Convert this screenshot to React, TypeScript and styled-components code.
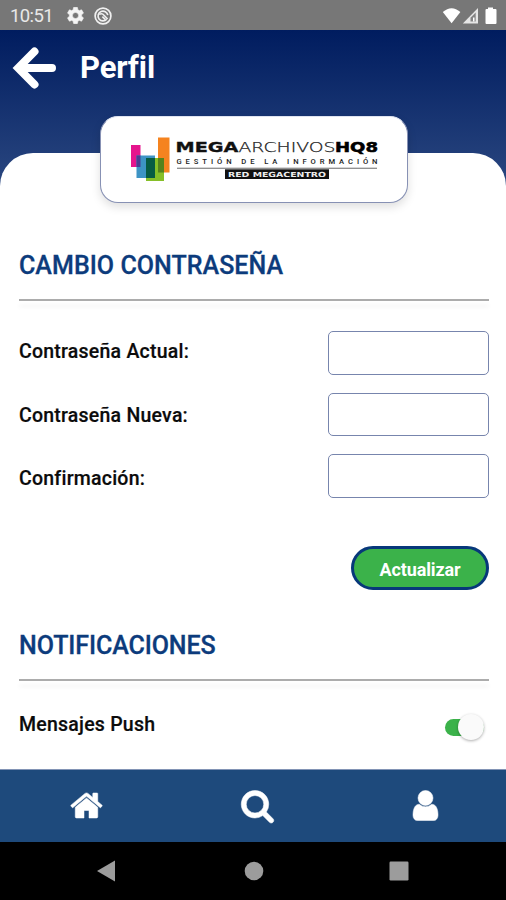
import React from 'react';
import styled, { createGlobalStyle } from 'styled-components';

const GlobalStyle = createGlobalStyle`
  * { box-sizing: border-box; }
  body { margin: 0; font-family: Roboto, "Liberation Sans", sans-serif; background: #fff; }
`;

const Screen = styled.div`
  width: 506px;
  height: 900px;
  display: flex;
  flex-direction: column;
  overflow: hidden;
  background: #fff;
`;

const StatusBar = styled.div`
  height: 30px;
  flex: none;
  display: flex;
  align-items: center;
  padding: 1px 8px 0 10px;
  background: #777;
  color: #e8e8e8;
`;

const Clock = styled.span`
  width: 57px;
  font-size: 18.5px;
  line-height: 28px;
  letter-spacing: -0.6px;
`;

const StatusIcons = styled.div`
  display: flex;
  align-items: center;
  gap: 10px;
  flex: 1;
`;

const SystemIcons = styled.div`
  display: flex;
`;

const Header = styled.header`
  height: 156px;
  flex: none;
  display: flex;
  flex-direction: column;
  background: linear-gradient(#001c5f, #2a4780);
`;

const TitleRow = styled.div`
  height: 86px;
  flex: none;
  display: flex;
  padding-left: 12px;
`;

const BackButton = styled.button`
  width: 46px;
  height: 46px;
  margin-top: 15px;
  padding: 0;
  border: 0;
  background: none;
`;

const PageTitle = styled.h1`
  margin: 19px 0 0 22px;
  font-size: 31px;
  line-height: 38px;
  font-weight: 700;
  letter-spacing: -0.1px;
  color: #fff;
`;

const Sheet = styled.main`
  height: 616px;
  flex: none;
  margin-top: -33px;
  padding: 0 17px 0 19px;
  display: flex;
  flex-direction: column;
  background: #fff;
  border-radius: 33px 33px 0 0;
`;

const LogoCard = styled.div`
  width: 308px;
  height: 87px;
  flex: none;
  margin: -37px 0 0 80.5px;
  border: 1px solid #8791b4;
  border-top-color: #dfe4f0;
  border-radius: 18px;
  background: #fff;
  box-shadow: 0 4px 10px rgba(0, 0, 0, 0.13);
`;

const SectionTitle = styled.h2<{ $top: number; $spacing: number }>`
  margin: ${(p) => p.$top}px 0 0;
  height: 36px;
  font-size: 25px;
  line-height: 36px;
  font-weight: 500;
  letter-spacing: ${(p) => p.$spacing}px;
  color: #0c3b7c;
  -webkit-text-stroke: 0.3px #0c3b7c;
`;

const Divider = styled.div`
  height: 2px;
  flex: none;
  margin-top: 15px;
  background: #acacac;
  box-shadow: 0 6px 4px rgba(0, 0, 0, 0.06);
`;

const PasswordForm = styled.div`
  display: flex;
  justify-content: space-between;
  height: 167px;
  margin-top: 30px;
`;

const Labels = styled.div`
  display: flex;
  flex-direction: column;
  gap: 33.5px;
  padding-top: 6px;
`;

const Label = styled.label`
  font-size: 19.5px;
  line-height: 30px;
  font-weight: 500;
  letter-spacing: 0.23px;
  color: #0b0b0b;
  -webkit-text-stroke: 0.2px #0b0b0b;
`;

const Inputs = styled.div`
  display: flex;
  flex-direction: column;
  gap: 18px;
`;

const Input = styled.input`
  width: 161.5px;
  height: 43.6px;
  padding: 0 10px;
  border: 1.5px solid #7785ad;
  border-radius: 5px;
  background: #fff;
  outline: none;
`;

const UpdateButton = styled.button`
  align-self: flex-end;
  width: 138px;
  height: 44px;
  flex: none;
  margin: 48px 0 0;
  padding: 2px 0 0;
  border: 3px solid #07387a;
  border-radius: 22px;
  background: #3bb24a;
  color: #fff;
  font: 700 18px Roboto, sans-serif;
  letter-spacing: -0.1px;
`;

const SettingRow = styled.div`
  display: flex;
  justify-content: space-between;
  align-items: center;
  height: 30px;
  margin-top: 29px;
  padding-right: 5px;
`;

const Toggle = styled.button`
  display: flex;
  align-items: center;
  justify-content: flex-end;
  width: 39px;
  height: 17px;
  margin-top: 4px;
  padding: 0;
  border: 0;
  border-radius: 9px;
  background: #3bb24a;
`;

const Knob = styled.span`
  width: 26px;
  height: 26px;
  flex: none;
  border-radius: 50%;
  background: #fafafa;
  box-shadow: 0 1px 3px rgba(0, 0, 0, 0.32);
`;

const TabBar = styled.nav`
  height: 73px;
  flex: none;
  display: grid;
  grid-template-columns: 172px 171px 164px;
  align-items: center;
  justify-items: center;
  border-top: 1px solid #8294b5;
  background: #1e4a7c;
`;

const Tab = styled.a`
  display: flex;
  margin-bottom: 2px;
  color: #fff;
`;

const SystemNav = styled.div`
  flex: 1;
  display: grid;
  grid-template-columns: 212px 83px 208px;
  align-items: center;
  justify-items: center;
  background: #000;
`;

const icons = {
  home: 'M1472 992v480q0 26-19 45t-45 19h-384v-384h-256v384h-384q-26 0-45-19t-19-45v-480q0-1 .5-3t.5-3l575-474 575 474q1 2 1 6zm223-69l-62 74q-8 9-21 11h-3q-13 0-21-7l-692-577-692 577q-12 8-24 7-13-2-21-11l-62-74q-8-10-7-23.5t11-21.5l719-599q32-26 76-26t76 26l244 204v-195q0-14 9-23t23-9h192q14 0 23 9t9 23v408l219 182q10 8 11 21.5t-7 23.5z',
  search: 'M1216 832q0-185-131.5-316.5t-316.5-131.5-316.5 131.5-131.5 316.5 131.5 316.5 316.5 131.5 316.5-131.5 131.5-316.5zm512 832q0 52-38 90t-90 38q-54 0-90-38l-343-342q-179 124-399 124-143 0-273.5-55.5t-225-150-150-225-55.5-273.5 55.5-273.5 150-225 225-150 273.5-55.5 273.5 55.5 225 150 150 225 55.5 273.5q0 220-124 399l343 343q37 37 37 90z',
  user: 'M1536 1399q0 109-62.5 187t-150.5 78h-854q-88 0-150.5-78t-62.5-187q0-85 8.5-160.5t31.5-152 58.5-131 94-89 134.5-34.5q131 128 313 128t313-128q76 0 134.5 34.5t94 89 58.5 131 31.5 152 8.5 160.5zm-256-887q0 159-112.5 271.5t-271.5 112.5-271.5-112.5-112.5-271.5 112.5-271.5 271.5-112.5 271.5 112.5 112.5 271.5z',
};

const TabIcon = ({ name }: { name: keyof typeof icons }) => (
  <svg width="35" height="35" viewBox="0 0 1792 1792" fill="currentColor" stroke="currentColor" strokeWidth="26" overflow="visible">
    <path d={icons[name]} />
  </svg>
);

const GearIcon = () => (
  <svg width="17" height="17" viewBox="2 2 20 20" fill="#f4f4f4" stroke="#f4f4f4" strokeWidth="0.7">
    <path d="M19.14 12.94c.04-.3.06-.61.06-.94 0-.32-.02-.64-.07-.94l2.03-1.58a.49.49 0 0 0 .12-.61l-1.92-3.32a.488.488 0 0 0-.59-.22l-2.39.96c-.5-.38-1.03-.7-1.62-.94l-.36-2.54a.484.484 0 0 0-.48-.41h-3.84c-.24 0-.43.17-.47.41l-.36 2.54c-.59.24-1.13.57-1.62.94l-2.39-.96c-.22-.08-.47 0-.59.22L2.74 8.87c-.12.21-.08.47.12.61l2.03 1.58c-.05.3-.09.63-.09.94s.02.64.07.94l-2.03 1.58a.49.49 0 0 0-.12.61l1.92 3.32c.12.22.37.29.59.22l2.39-.96c.5.38 1.03.7 1.62.94l.36 2.54c.05.24.24.41.48.41h3.84c.24 0 .44-.17.47-.41l.36-2.54c.59-.24 1.13-.56 1.62-.94l2.39.96c.22.08.47 0 .59-.22l1.92-3.32c.12-.22.07-.47-.12-.61l-2.01-1.58zM12 15.6A3.6 3.6 0 1 1 12 8.4a3.6 3.6 0 0 1 0 7.2z" />
  </svg>
);

const TrackerIcon = () => (
  <svg width="18" height="18" viewBox="0 0 18 18" fill="none" stroke="#f0f0f0">
    <circle cx="9" cy="9" r="7.9" strokeWidth="1.7" />
    <path d="M12.7 12.2A4.9 4.9 0 1 1 13.8 8.2" strokeWidth="1.6" />
    <path d="M5.2 7.4Q8 5.8 10 8.2L13.6 12M8.4 9.6L11.4 12.6" strokeWidth="1.6" />
  </svg>
);

const Logo = () => (
  <svg width="306" height="85" viewBox="101 117 306 85">
    <rect x="131" y="145" width="9.5" height="22" fill="#e5158d" />
    <rect x="158" y="137.5" width="11.5" height="35" fill="#f5831f" />
    <rect x="136.5" y="155.5" width="18.5" height="22.5" fill="#3d94c5" />
    <rect x="136.5" y="155.5" width="4" height="11.5" fill="#493e93" />
    <rect x="146" y="158" width="18" height="23" fill="#86bf28" />
    <rect x="146" y="158" width="9" height="20" fill="#075c43" />
    <rect x="158" y="158" width="6" height="14.5" fill="#55831c" />
    <g fontFamily='"DejaVu Sans", sans-serif' fontSize="13.2">
      <text x="175.5" y="152" textLength="63" lengthAdjust="spacingAndGlyphs" fontWeight="700" fill="#111" stroke="#111" strokeWidth="0.3">MEGA</text>
      <text x="238.5" y="152" textLength="97" lengthAdjust="spacingAndGlyphs" fontWeight="200" fill="#222" stroke="#222" strokeWidth="0.25">ARCHIVOS</text>
      <text x="335" y="152" textLength="43" lengthAdjust="spacingAndGlyphs" fontWeight="700" fill="#000" stroke="#000" strokeWidth="0.5">HQ8</text>
    </g>
    <text x="176.5" y="163.7" textLength="201" fontFamily="Roboto" fontSize="7.6" fontWeight="500" fill="#222">GESTIÓN DE LA INFORMACIÓN</text>
    <rect x="177" y="167.7" width="200" height="1.1" fill="#777" />
    <rect x="225" y="169.3" width="104" height="9.7" fill="#111" />
    <text x="228" y="176.8" textLength="98" lengthAdjust="spacingAndGlyphs" fontFamily='"DejaVu Sans"' fontSize="7" fontWeight="700" fill="#eee">RED MEGACENTRO</text>
  </svg>
);

export default function App() {
  return (
    <Screen>
      <GlobalStyle />
      <StatusBar>
        <Clock>10:51</Clock>
        <StatusIcons>
          <GearIcon />
          <TrackerIcon />
        </StatusIcons>
        <SystemIcons>
          <svg width="56" height="18" viewBox="0 0 56 18" fill="#fff">
            <path d="M0.8 5Q9.6-2.6 18.4 5L9.6 16.2Z" />
            <path d="M20.8 16.5L36 1V16.5Z" fill="#e6e6e6" />
            <path d="M28.5 14.5V10.8L33.7 5.5V14.5Z" fill="#858585" />
            <path d="M31 10.5h1.5v4H31z" />
            <path d="M46 0.5h5v1.5h2.5q1 0 1 1v13q0 1-1 1h-9q-1 0-1-1V3q0-1 1-1H46z" />
          </svg>
        </SystemIcons>
      </StatusBar>
      <Header>
        <TitleRow>
          <BackButton aria-label="Volver">
            <svg width="46" height="46" viewBox="0 0 46 46" fill="none" stroke="#fff" strokeWidth="8" strokeLinecap="round">
              <path d="M22.5 6.5L6.2 23L22.5 39.5M9 23H40" />
            </svg>
          </BackButton>
          <PageTitle>Perfil</PageTitle>
        </TitleRow>
      </Header>
      <Sheet>
        <LogoCard>
          <Logo />
        </LogoCard>
        <SectionTitle $top={45} $spacing={0.05}>CAMBIO CONTRASEÑA</SectionTitle>
        <Divider />
        <PasswordForm>
          <Labels>
            <Label htmlFor="actual">Contraseña Actual:</Label>
            <Label htmlFor="nueva">Contraseña Nueva:</Label>
            <Label htmlFor="confirmacion">Confirmación:</Label>
          </Labels>
          <Inputs>
            <Input id="actual" type="password" />
            <Input id="nueva" type="password" />
            <Input id="confirmacion" type="password" />
          </Inputs>
        </PasswordForm>
        <UpdateButton>Actualizar</UpdateButton>
        <SectionTitle $top={38} $spacing={-0.1}>NOTIFICACIONES</SectionTitle>
        <Divider />
        <SettingRow>
          <Label>Mensajes Push</Label>
          <Toggle role="switch" aria-checked="true" aria-label="Mensajes Push">
            <Knob />
          </Toggle>
        </SettingRow>
      </Sheet>
      <TabBar>
        <Tab><TabIcon name="home" /></Tab>
        <Tab><TabIcon name="search" /></Tab>
        <Tab><TabIcon name="user" /></Tab>
      </TabBar>
      <SystemNav>
        <svg width="20" height="22" viewBox="0 0 20 22" fill="#9c9c9c"><path d="M1 11L19 0.5V21.5Z" /></svg>
        <svg width="20" height="20" viewBox="0 0 20 20" fill="#9c9c9c"><circle cx="10" cy="10" r="9.3" /></svg>
        <svg width="20" height="20" viewBox="0 0 20 20" fill="#9c9c9c"><rect x="0.5" y="0.5" width="19" height="19" rx="1.2" /></svg>
      </SystemNav>
    </Screen>
  );
}
